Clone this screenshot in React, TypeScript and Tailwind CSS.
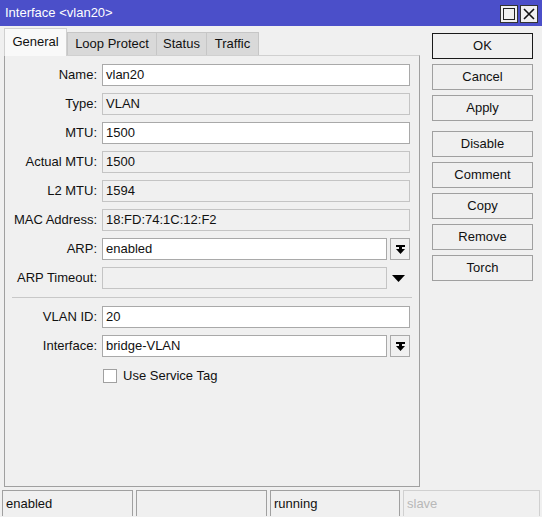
import React from "react";

const DropIcon = () => (
    <svg width="9" height="9" viewBox="0 0 9 9">
        <rect x="0" y="0" width="9" height="2" fill="#000" />
        <rect x="3" y="2" width="3" height="2" fill="#000" />
        <polygon points="0,4 9,4 4.5,9" fill="#000" />
    </svg>
);

const Field = ({ label, value, editable, drop, arrow }: { label: string; value: string; editable?: boolean; drop?: boolean; arrow?: boolean }) => (
    <div className="flex items-center h-[22px]">
        <div className="w-[93px] text-right pr-[1px]">{label}</div>
        <div className="flex flex-1 ml-[4px] h-[22px]">
            <div
                className={`flex-1 h-[22px] border border-[#a9a9a9] px-[3px] flex items-center ${editable ? "bg-white" : "bg-[#f0f0f0] border-[#c4c4c4]"}`}
            >
                {value}
            </div>
            {drop && (
                <div className="w-[20px] h-[22px] ml-[3px] border border-[#a9a9a9] bg-[#f0f0f0] flex items-center justify-center">
                    <DropIcon />
                </div>
            )}
            {arrow && (
                <div className="w-[23px] h-[22px] flex items-center justify-center">
                    <svg width="13" height="7" viewBox="0 0 13 7">
                        <polygon points="0,0 13,0 6.5,7" fill="#000" />
                    </svg>
                </div>
            )}
        </div>
    </div>
);

const Btn = ({ children, primary }: { children: React.ReactNode; primary?: boolean }) => (
    <div
        className={`h-[26px] flex items-center justify-center bg-[#f0f0f0] border ${primary ? "border-[#1a1a1a]" : "border-[#a0a0a0]"}`}
    >
        {children}
    </div>
);

export default function App() {
    return (
        <div className="w-[542px] h-[517px] bg-[#f0f0f0] flex flex-col text-[13px] text-[#111] font-['Liberation_Sans',Arial,sans-serif] overflow-hidden">
            {/* Title bar */}
            <div className="h-[26px] bg-[#4b4fc9] flex items-center pl-[5px] pr-[4px]">
                <span className="text-white flex-1">Interface &lt;vlan20&gt;</span>
                <div className="flex gap-[2px] pt-[1px]">
                    <div className="w-[18px] h-[18px] bg-[#f0f0f0] border border-[#333] flex items-center justify-center">
                        <div className="w-[12px] h-[12px] border border-[#222]" />
                    </div>
                    <div className="w-[18px] h-[18px] bg-[#f0f0f0] border border-[#333] flex items-center justify-center">
                        <svg width="12" height="12" viewBox="0 0 12 12">
                            <path d="M1 1L11 11M11 1L1 11" stroke="#111" strokeWidth="1.6" />
                        </svg>
                    </div>
                </div>
            </div>

            <div className="flex flex-1">
                {/* Left: tabs + panel */}
                <div className="ml-[4px] w-[416px] pt-[1px] flex flex-col">
                    <div className="flex items-end h-[28px]">
                        <div className="relative z-10 -mb-px h-[28px] w-[63px] bg-[#f9f9f9] border border-b-0 border-[#d0d0d0] flex items-center justify-center pb-[2px]">
                            General
                        </div>
                        <div className="h-[23px] w-[90px] bg-[#d9d9d9] border border-b-0 border-[#c6c6c6] flex items-center justify-center">
                            Loop Protect
                        </div>
                        <div className="h-[23px] w-[50px] bg-[#d9d9d9] border border-b-0 border-l-0 border-[#c6c6c6] flex items-center justify-center">
                            Status
                        </div>
                        <div className="h-[23px] w-[52px] bg-[#d9d9d9] border border-b-0 border-l-0 border-[#c6c6c6] flex items-center justify-center">
                            Traffic
                        </div>
                    </div>
                    <div className="flex-1 mb-[3px] border border-[#a0a0a0] border-t-[#d0d0d0] pt-[8px] pr-[9px] flex flex-col gap-[7px]">
                        <Field label="Name:" value="vlan20" editable />
                        <Field label="Type:" value="VLAN" />
                        <Field label="MTU:" value="1500" editable />
                        <Field label="Actual MTU:" value="1500" />
                        <Field label="L2 MTU:" value="1594" />
                        <Field label="MAC Address:" value="18:FD:74:1C:12:F2" />
                        <Field label="ARP:" value="enabled" editable drop />
                        <Field label="ARP Timeout:" value="" arrow />
                        <div className="ml-[7px] mr-[-2px] my-[1px] h-px bg-[#c8c8c8]" />
                        <Field label="VLAN ID:" value="20" editable />
                        <Field label="Interface:" value="bridge-VLAN" editable drop />
                        <div className="flex items-center h-[18px] mt-[3px] pl-[98px]">
                            <div className="w-[14px] h-[14px] bg-white border border-[#a0a0a0]" />
                            <span className="ml-[6px]">Use Service Tag</span>
                        </div>
                    </div>
                </div>

                {/* Right: buttons */}
                <div className="ml-[12px] w-[101px] pt-[7px] flex flex-col">
                    <div className="flex flex-col gap-[5px]">
                        <Btn primary>OK</Btn>
                        <Btn>Cancel</Btn>
                        <Btn>Apply</Btn>
                    </div>
                    <div className="flex flex-col gap-[5px] mt-[10px]">
                        <Btn>Disable</Btn>
                        <Btn>Comment</Btn>
                        <Btn>Copy</Btn>
                        <Btn>Remove</Btn>
                        <Btn>Torch</Btn>
                    </div>
                </div>
            </div>

            {/* Status bar */}
            <div className="h-[27px] flex gap-[3px] px-[2px] pb-[1px]">
                <div className="w-[131px] border border-b-0 border-[#a0a0a0] px-[3px] flex items-center">enabled</div>
                <div className="w-[131px] border border-b-0 border-[#a0a0a0]" />
                <div className="w-[130px] border border-b-0 border-[#a0a0a0] px-[3px] flex items-center">running</div>
                <div className="flex-1 border border-b-0 border-[#d0d0d0] px-[3px] flex items-center text-[#b8b8b8]">slave</div>
            </div>
        </div>
    );
}
